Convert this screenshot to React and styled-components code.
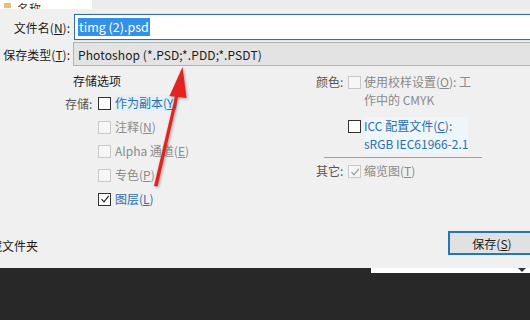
import styled, { createGlobalStyle } from "styled-components";

const Global = createGlobalStyle`
  html, body { margin: 0; padding: 0; background: #282828; }
  body { font-family: "Noto Sans CJK SC", "Noto Sans", sans-serif; font-size: 12px; color: #1b1b1b; }
`;

const Page = styled.div`
  width: 530px;
  height: 320px;
  overflow: hidden;
  position: relative;
  background: #282828;
`;

const Dialog = styled.div`
  background: #f0f0f0;
  height: 268px;
  display: flex;
  flex-direction: column;
`;

const TopStrip = styled.div`
  height: 9px;
  display: flex;
  overflow: hidden;
  background: #ececec;
`;

const ListHead = styled.div`
  width: 88px;
  background: #fff;
  display: flex;
  align-items: flex-end;
  gap: 6px;
  padding-left: 4px;
  font-size: 12px;
  line-height: 12px;
  span { margin-bottom: -6px; color: #333; }
`;

const Folder = styled.div`
  width: 7px;
  height: 5px;
  background: #e8c26a;
  margin-bottom: 1px;
`;

const Fields = styled.div`
  display: grid;
  grid-template-columns: 72px 1fr;
  row-gap: 2px;
  margin-top: 5px;
  align-items: center;
`;

const Label = styled.div`
  text-align: right;
  padding-right: 2px;
  white-space: nowrap;
  color: #1b1b1b;
  u { text-decoration: underline; }
`;

const NameInput = styled.div`
  height: 24px;
  border: 1px solid #2f7196;
  border-right: none;
  box-shadow: 0 -1px 0 #d3ebf5, 0 1px 0 #d3ebf5;
  background: #fff;
  display: flex;
  align-items: center;
  padding-left: 3px;
  margin-left: 2px;
`;

const Selected = styled.span`
  background: #3390e8;
  color: #fff;
  font-size: 12.5px;
  line-height: 18px;
  padding: 0 1px;
`;

const TypeSelect = styled.div`
  height: 22px;
  border: 1px solid #b3b3b3;
  border-right: none;
  background: #e3e3e3;
  display: flex;
  align-items: center;
  padding-left: 4px;
  margin-left: 1px;
  font-size: 12px;
  letter-spacing: 0.1px;
`;

const Options = styled.div`
  display: flex;
  margin-top: 7px;
`;

const LeftCol = styled.div`
  width: 251px;
  padding-left: 65px;
  display: flex;
  flex-direction: column;
`;

const Heading = styled.div`
  padding-left: 8px;
  height: 16px;
  line-height: 16px;
  margin-bottom: 2px;
`;

const OptRow = styled.div`
  display: flex;
  align-items: center;
  height: 24px;
`;

const RowLabel = styled.div`
  width: ${(p) => p.$w}px;
  color: #555;
  white-space: nowrap;
`;

const Box = styled.div`
  width: 11px;
  height: 11px;
  flex: none;
  border: 1px solid ${(p) => (p.$off ? "#c9c9c9" : "#333")};
  background: ${(p) => (p.$off ? "#f6f6f6" : "#fff")};
  margin-right: 4px;
  display: flex;
  align-items: center;
  justify-content: center;
  svg { display: block; }
`;

const OptText = styled.span`
  color: ${(p) => (p.$blue ? "#2a6fa8" : p.$off ? "#8c8c8c" : "#1b1b1b")};
  background: ${(p) => (p.$hl ? "#e3f0fa" : "transparent")};
  line-height: 16px;
  white-space: nowrap;
  u { text-decoration: underline; }
`;

const RightCol = styled.div`
  display: flex;
  flex-direction: column;
  width: 170px;
`;

const RBlock = styled.div`
  display: flex;
  align-items: flex-start;
  line-height: 18px;
  margin-top: ${(p) => p.$gap || 0}px;
`;

const RBox = styled(Box)`
  margin-top: 3px;
  margin-right: 3px;
`;

const Lines = styled.div`
  display: flex;
  flex-direction: column;
  color: ${(p) => (p.$blue ? "#2a6fa8" : "#8a8a8a")};
  background: ${(p) => (p.$hl ? "#eef5fb" : "transparent")};
  u { text-decoration: underline; }
`;

const Sep = styled.div`
  height: 1px;
  background: #a0a0a0;
  margin: 4px 0 4px 8px;
  width: 158px;
`;

const Bottom = styled.div`
  margin-top: auto;
  margin-bottom: 13px;
  display: flex;
  align-items: center;
  justify-content: space-between;
`;

const Hide = styled.div`
  margin-left: -22px;
  padding-top: 5px;
  white-space: nowrap;
`;

const SaveBtn = styled.button`
  width: 88px;
  height: 24px;
  margin-right: -6px;
  border: 2px solid #2477b6;
  background: #e1e1e1;
  font-family: inherit;
  font-size: 12px;
  color: #1b1b1b;
  padding: 0;
  u { text-decoration: underline; }
`;

const Taskbar = styled.div`
  display: flex;
  justify-content: flex-end;
`;

const Strip = styled.div`
  width: 159px;
  height: 5px;
  background: #fff;
  position: relative;
`;

const Notch = styled.div`
  position: absolute;
  right: 4px;
  top: 0;
  width: 0;
  height: 0;
  border-left: 4px solid transparent;
  border-right: 4px solid transparent;
  border-top: 4px solid #333;
`;

const Arrow = styled.svg`
  position: absolute;
  left: 0;
  top: 0;
  pointer-events: none;
  filter: drop-shadow(1px 1px 1.5px rgba(0, 0, 0, 0.35));
`;

const Check = ({ c = "#222" }) => (
  <svg width="10" height="10" viewBox="0 0 10 10">
    <path d="M1.5 5.2 L4 7.8 L8.8 1.8" fill="none" stroke={c} strokeWidth="1.2" />
  </svg>
);

export default function App() {
  return (
    <Page>
      <Global />
      <Dialog>
        <TopStrip>
          <ListHead>
            <Folder />
            <span>名称</span>
          </ListHead>
        </TopStrip>
        <Fields>
          <Label>文件名(<u>N</u>):</Label>
          <NameInput>
            <Selected>timg (2).psd</Selected>
          </NameInput>
          <Label>保存类型(<u>T</u>):</Label>
          <TypeSelect>Photoshop (*.PSD;*.PDD;*.PSDT)</TypeSelect>
        </Fields>
        <Options>
          <LeftCol>
            <Heading>存储选项</Heading>
            <OptRow>
              <RowLabel $w={33}>存储:</RowLabel>
              <Box />
              <OptText $blue $hl>作为副本(<u>Y</u>)</OptText>
            </OptRow>
            <OptRow>
              <RowLabel $w={33} />
              <Box $off />
              <OptText $off>注释(<u>N</u>)</OptText>
            </OptRow>
            <OptRow>
              <RowLabel $w={33} />
              <Box $off />
              <OptText $off>Alpha 通道(<u>E</u>)</OptText>
            </OptRow>
            <OptRow>
              <RowLabel $w={33} />
              <Box $off />
              <OptText $off>专色(<u>P</u>)</OptText>
            </OptRow>
            <OptRow>
              <RowLabel $w={33} />
              <Box>
                <Check />
              </Box>
              <OptText $blue>图层(<u>L</u>)</OptText>
            </OptRow>
          </LeftCol>
          <RightCol>
            <RBlock>
              <RowLabel $w={32}>颜色:</RowLabel>
              <RBox $off />
              <Lines>
                <span>使用校样设置(<u>O</u>): 工</span>
                <span>作中的 CMYK</span>
              </Lines>
            </RBlock>
            <RBlock $gap={8}>
              <RowLabel $w={32} />
              <RBox />
              <Lines $blue $hl>
                <span>ICC 配置文件(<u>C</u>):</span>
                <span>sRGB IEC61966-2.1</span>
              </Lines>
            </RBlock>
            <Sep />
            <RBlock>
              <RowLabel $w={32}>其它:</RowLabel>
              <RBox $off>
                <Check c="#9a9a9a" />
              </RBox>
              <Lines>
                <span>缩览图(<u>T</u>)</span>
              </Lines>
            </RBlock>
          </RightCol>
        </Options>
        <Bottom>
          <Hide>隐藏文件夹</Hide>
          <SaveBtn>保存(<u>S</u>)</SaveBtn>
        </Bottom>
      </Dialog>
      <Taskbar>
        <Strip>
          <Notch />
        </Strip>
      </Taskbar>
      <Arrow width="530" height="320" viewBox="0 0 530 320">
        <path d="M154 186 L157.5 186.5 L178.5 95 L175.5 94.5 Z" fill="#e2231f" />
        <path d="M182.5 67 L169.5 96 L186.5 98 Z" fill="#e2231f" />
      </Arrow>
    </Page>
  );
}
